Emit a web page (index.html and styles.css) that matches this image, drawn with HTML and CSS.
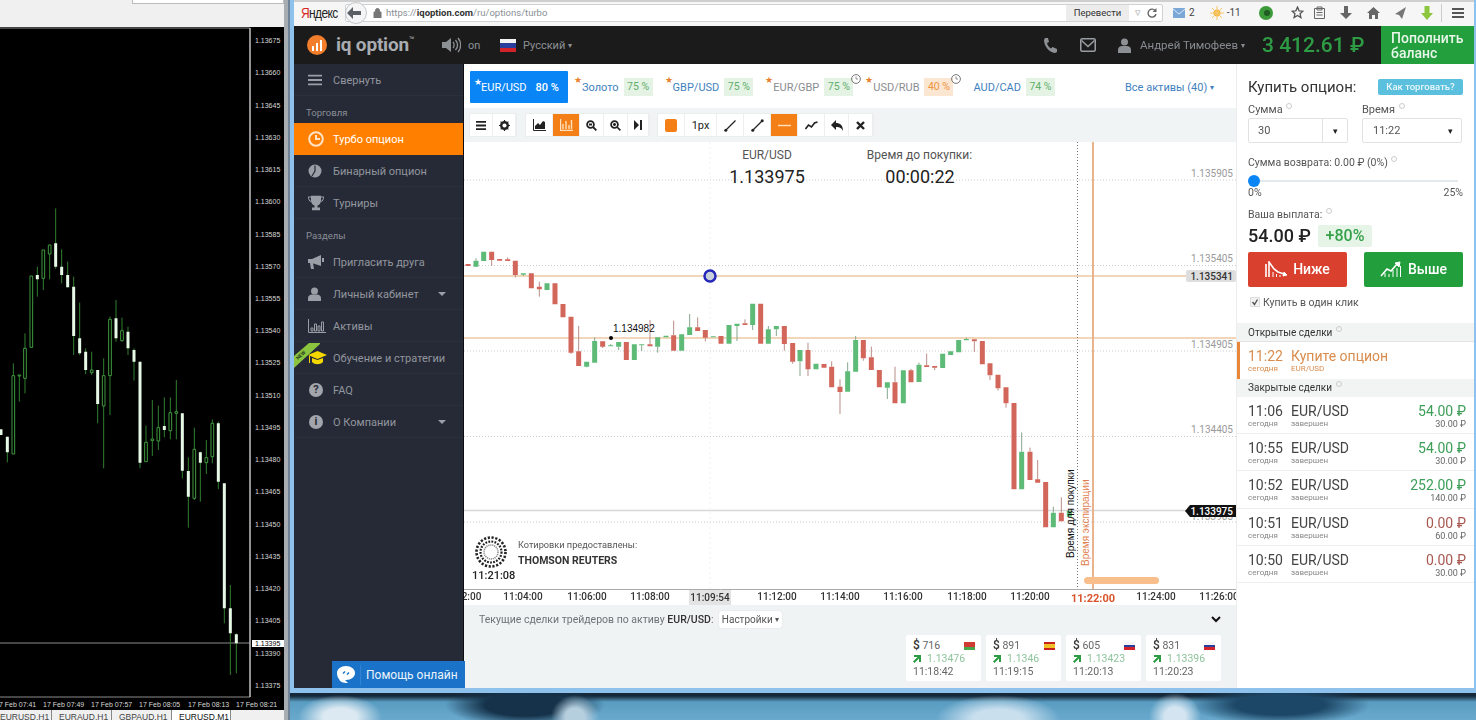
FILE: index.html
```html
<!DOCTYPE html>
<html lang="ru">
<head>
<meta charset="utf-8">
<title>IQ Option</title>
<link rel="stylesheet" href="styles.css">
</head>
<body>
<div class="desktop">
  <section class="mt4">
    <div class="mt4-top"><div class="mt4-input"></div></div>
    <svg class="mt4-chart" width="284" height="683" viewBox="0 27 284 683">
      <rect x="0" y="27" width="284" height="683" fill="#000"/>
      <path d="M0 28H250V697H0M0 643H250" fill="none" stroke="#8b8b8b" stroke-width="1"/>
      <g transform="scale(.33333)">
        <path class="mw" d="M22 1310V1387M40 1090V1362M58 1125V1205M75 1000V1180M112 800V890M130 750V870M149 735V838M167 625V806M185 748V850M203 785V862M221 830V1065M239 908V1065M257 1045V1122M275 1055V1125M293 1110V1270M311 1075V1405M330 950V1245M348 900V1025M366 953V1025M384 980V1065M402 1045V1142M420 1085V1405M438 1277V1385M457 1200V1368M475 1217V1350M493 1192V1312M511 1192V1318M529 1140V1318M547 1240V1435M565 1372V1583M583 1283V1500M601 1355V1505M619 1320V1422M637 1258V1390M655 1265V1467M673 1450V1870M691 1755V2025M709 1900V2020"/>
        <path class="mh" d="M36 1127h8V1362h-8zM54 1125h8V1128h-8zM71 1045h8V1135h-8zM90 828h8V1042h-8zM126 750h8V835h-8zM145 735h8V762h-8zM271 1110h8V1118h-8zM307 1127h8V1218h-8zM326 958h8V1127h-8zM362 992h8V1022h-8zM434 1327h8V1385h-8zM453 1317h8V1322h-8zM471 1283h8V1323h-8zM507 1238h8V1292h-8zM525 1235h8V1240h-8zM579 1348h8V1495h-8zM615 1373h8V1388h-8zM633 1270h8V1370h-8z"/>
        <path class="ms" d="M3 1288V1305M22 1310V1357M112 825V838M167 730V800M185 800V825M203 825V862M221 860V1008M239 1015V1060M257 1055V1110M293 1110V1212M348 955V1015M384 995V1045M402 1050V1085M420 1085V1388M493 1278V1290M547 1240V1412M565 1413V1490M601 1357V1388M655 1270V1445M673 1450V1825M691 1825V1900M709 1903V1930"/>
      </g>
      <g class="mt4-axis">
        <text x="255" y="42.500">1.13675</text><text x="255" y="74.500">1.13660</text><text x="255" y="107.500">1.13645</text>
        <text x="255" y="139.500">1.13630</text><text x="255" y="172">1.13615</text><text x="255" y="204">1.13600</text>
        <text x="255" y="236.500">1.13585</text><text x="255" y="268.500">1.13570</text><text x="255" y="301">1.13555</text>
        <text x="255" y="333">1.13540</text><text x="255" y="365">1.13525</text><text x="255" y="397.500">1.13510</text>
        <text x="255" y="429.500">1.13495</text><text x="255" y="462">1.13480</text><text x="255" y="494">1.13465</text>
        <text x="255" y="526.500">1.13450</text><text x="255" y="558.500">1.13435</text><text x="255" y="591">1.13420</text>
        <text x="255" y="623">1.13405</text><text x="255" y="655.500">1.13390</text><text x="255" y="687.500">1.13375</text>
        <rect x="252" y="640" width="32" height="7" fill="#fff"/>
        <text class="mt4-bid" x="255" y="646">1.13395</text>
        <text x="-5" y="706.500">17 Feb 07:41</text><text x="43" y="706.500">17 Feb 07:49</text><text x="91" y="706.500">17 Feb 07:57</text>
        <text x="139" y="706.500">17 Feb 08:05</text><text x="188" y="706.500">17 Feb 08:13</text><text x="236" y="706.500">17 Feb 08:21</text>
      </g>
      <path d="M250 28V697" stroke="#ddd" stroke-width="1"/>
    </svg>
    <div class="mt4-tabs">
      <span class="mt4-tab">EURUSD,H1</span>
      <span class="mt4-tab">EURAUD,H1</span>
      <span class="mt4-tab">GBPAUD,H1</span>
      <span class="mt4-tab mt4-tab-on">EURUSD,M1</span>
    </div>
  </section>

  <div class="mt4-edge"></div>

  <div class="right-side">
    <main class="window">
      <header class="browser-bar">
        <span class="ya"><b>Я</b>ндекс</span>
        <div class="urlbar">
          <span class="back"><svg width="14" height="12" viewBox="0 0 14 12"><path d="M6 0 0 6l6 6V8h8V4H6z" fill="#5a5f66"/></svg></span>
          <svg class="lock" width="9" height="10" viewBox="0 0 9 10"><path d="M1 4h7v6H1zM2.500 4V2.500a2 2 0 0 1 4 0V4" fill="#777" stroke="#777"/></svg>
          <span class="url">https://<b>iqoption.com</b>/ru/options/turbo</span>
          <span class="translate">Перевести</span>
          <span class="url-arrow">▿</span>
          <svg width="10" height="10" viewBox="0 0 10 10"><path d="M8.500 3A4 4 0 1 0 9 6" fill="none" stroke="#666" stroke-width="1.400"/><path d="M9.500 0v4h-4z" fill="#666"/></svg>
        </div>
        <div class="bar-icons">
          <span class="bar-item"><svg width="12" height="10" viewBox="0 0 12 10"><rect width="12" height="10" fill="#7ba7d6"/><path d="m0 1 6 5 6-5" fill="none" stroke="#dce9f6"/></svg>2</span>
          <span class="bar-item bar-sun"><svg width="14" height="14" viewBox="0 0 14 14"><circle cx="7" cy="7" r="3.600" fill="#f4b942"/><path d="M7 0v14M0 7h14M2 2l10 10M12 2 2 12" stroke="#f4c76c"/></svg>-11</span>
          <svg class="bar-coin" width="14" height="14" viewBox="0 0 14 14"><circle cx="7" cy="7" r="7" fill="#3d9a3a"/><circle cx="8" cy="7" r="3" fill="#1f5c22"/></svg>
          <svg class="bar-glyph bar-star" width="13" height="13" viewBox="0 0 24 24"><path d="m12 2 3 7 7 .6-5.300 4.700 1.600 7.200L12 17.600 5.700 21.500l1.600-7.200L2 9.600 9 9z" fill="none" stroke="#555" stroke-width="2.400"/></svg>
          <svg class="bar-glyph" width="11" height="13" viewBox="0 0 11 13"><path d="M.5 2.500h10v10H.5zM3 1h5v3H3zM2.500 6.500h6M2.500 9h6" fill="none" stroke="#666"/></svg>
          <svg class="bar-glyph" width="12" height="13" viewBox="0 0 12 13"><path d="M4 0h4v7h4l-6 6-6-6h4z" fill="#666"/></svg>
          <svg class="bar-glyph" width="13" height="12" viewBox="0 0 13 12"><path d="M6.500 0 13 6h-2v6H8V8H5v4H2V6H0z" fill="#666"/></svg>
          <svg class="bar-glyph" width="11" height="12" viewBox="0 0 11 12"><path d="M11 0 0 7l4 1 3 4z" fill="#777"/></svg>
          <svg class="bar-glyph" width="12" height="14" viewBox="0 0 12 14"><path d="M3.500 0h5v7H12l-6 7-6-7h3.500z" fill="#8cc63f"/></svg>
          <span class="bar-div"></span>
          <svg width="12" height="10" viewBox="0 0 12 10"><path d="M0 0h12v2H0zM0 4h12v2H0zM0 8h12v2H0z" fill="#555"/></svg>
        </div>
      </header>

      <header class="site-head">
        <svg class="logo-mark" width="20" height="20" viewBox="0 0 20 20"><circle cx="10" cy="10" r="10" fill="#f27e2b"/><path d="M5 11h2v5H5zM9 8h2v8H9zM13 5h2v11h-2z" fill="#fff"/></svg>
        <span class="logo-text">iq option<sup>™</sup></span>
        <svg class="speaker" width="19" height="16" viewBox="0 0 19 16"><path d="M0 5h4l5-4v14l-5-4H0z" fill="#8d9196"/><path d="M11 5c1.500 1.500 1.500 4.500 0 6M13.500 3c2.500 3 2.500 7 0 10M16 1c3.500 4 3.500 10 0 14" fill="none" stroke="#8d9196" stroke-width="1.300"/></svg>
        <span class="on">on</span>
        <span class="flag flag-ru flag-lang"></span>
        <span class="lang">Русский <i class="mini">▾</i></span>
        <span class="head-space"></span>
        <svg class="h-phone" width="13" height="15" viewBox="0 0 13 15"><path d="M1 0 4 0l1 4-2 1c.5 2.500 2 4.500 4 5.500l1.500-1.500L13 11v3l-2 1C5 14.500 0 8 0 2z" fill="#8d9196"/></svg>
        <svg class="h-mail" width="16" height="14" viewBox="0 0 16 14"><rect x=".75" y=".75" width="14.500" height="12.500" rx="1.500" fill="none" stroke="#9a9ea3" stroke-width="1.500"/><path d="m1.500 2.500 6.500 6 6.500-6" fill="none" stroke="#9a9ea3" stroke-width="1.500"/></svg>
        <svg class="h-user" width="13" height="15" viewBox="0 0 13 15"><circle cx="6.500" cy="4" r="3.500" fill="#8d9196"/><path d="M0 15v-3c0-3 2-4 4-4h5c2 0 4 1 4 4v3z" fill="#8d9196"/></svg>
        <span class="uname">Андрей Тимофеев <i class="mini">▾</i></span>
        <span class="balance">3 412.61 ₽</span>
        <a class="topup">Пополнить баланс</a>
      </header>

      <div class="app">
        <nav class="side">
          <a class="nav"><svg class="ic" width="14" height="11" viewBox="0 0 14 11"><path d="M0 0h14v2H0zM0 4.500h14v2H0zM0 9h14v2H0z" fill="#9a9ea6"/></svg>Свернуть</a>
          <div class="nav-head">Торговля</div>
          <a class="nav nav-on"><svg class="ic" width="16" height="16" viewBox="0 0 16 16"><circle cx="8" cy="8" r="6.800" fill="none" stroke="#fde3c8" stroke-width="2"/><path d="M8 4v4h4" fill="none" stroke="#fde3c8" stroke-width="2"/></svg>Турбо опцион</a>
          <a class="nav"><svg class="ic" width="14" height="14" viewBox="0 0 14 14"><circle cx="7" cy="7" r="6.500" fill="#9a9ea6"/><path d="M7 1.500V7L4 12" fill="none" stroke="#262a36" stroke-width="1.200"/></svg>Бинарный опцион</a>
          <a class="nav"><svg class="ic" width="16" height="15" viewBox="0 0 16 15"><path d="M3 0h10v5c0 3-2 4.500-3.500 5V12H12v3H4v-3h2.500V10C5 9.500 3 8 3 5zM0 1h3v1H1c0 2 1 3 2 3.500v1C1 6 0 4 0 1zm16 0h-3v1h2c0 2-1 3-2 3.500v1c2-.5 3-2.500 3-5.500z" fill="#9a9ea6"/></svg>Турниры</a>
          <div class="nav-head">Разделы</div>
          <a class="nav"><svg class="ic" width="16" height="14" viewBox="0 0 16 14"><path d="M0 4h4l9-4v11L4 8H0zM14 3h2v4h-2zM2 8h3l1 6H3z" fill="#9a9ea6"/></svg>Пригласить друга</a>
          <a class="nav"><svg class="ic" width="13" height="14" viewBox="0 0 13 14"><circle cx="6.500" cy="4" r="3.500" fill="#9a9ea6"/><path d="M0 14v-3c0-2 2-3.500 4-3.500h5c2 0 4 1.500 4 3.500v3z" fill="#9a9ea6"/></svg>Личный кабинет<i class="caret"></i></a>
          <a class="nav"><svg class="ic" width="18" height="14" viewBox="0 0 18 14"><path d="M.5 0v13.500H18M3 9h2v3H3zM6.500 5h2v7h-2zM10 7h2v5h-2zM13.500 3h2v9h-2z" fill="none" stroke="#9a9ea6"/></svg>Активы</a>
          <a class="nav"><svg class="ic" width="19" height="14" viewBox="0 0 19 14"><path d="M0 4 9.500 0 19 4 9.500 8zM4 7l5.500 2L15 7v4c-3 3-8 3-11 0zM1 5h1v7H1z" fill="#f5d800"/></svg>Обучение и стратегии</a>
          <a class="nav"><span class="ic round">?</span>FAQ</a>
          <a class="nav"><span class="ic round">i</span>О Компании<i class="caret"></i></a>
          <svg class="ribbon" width="26" height="26" viewBox="0 0 26 26"><path d="M0 13 15 0h12L0 25z" fill="#8bc53f"/><text x="0" y="0" transform="translate(4 17) rotate(-42)" class="ribbon-text">NEW</text></svg>
        </nav>

        <section class="center">
          <div class="assets">
            <a class="tab tab-on"><i class="star">★</i>EUR/USD<span class="pct">80 %</span></a>
            <a class="tab tab-first"><i class="star">★</i>Золото<span class="badge">75 %</span></a>
            <a class="tab"><i class="star">★</i>GBP/USD<span class="badge">75 %</span></a>
            <a class="tab tab-grey"><i class="star">★</i>EUR/GBP<span class="badge">75 %</span><svg class="clock" width="10" height="10" viewBox="0 0 10 10"><circle cx="5" cy="5" r="4.400" fill="none" stroke="#777"/><path d="M5 2.500V5h2" fill="none" stroke="#777" stroke-width=".8"/></svg></a>
            <a class="tab tab-grey"><i class="star">★</i>USD/RUB<span class="badge badge-warn">40 %</span><svg class="clock" width="10" height="10" viewBox="0 0 10 10"><circle cx="5" cy="5" r="4.400" fill="none" stroke="#777"/><path d="M5 2.500V5h2" fill="none" stroke="#777" stroke-width=".8"/></svg></a>
            <a class="tab">AUD/CAD<span class="badge">74 %</span></a>
            <a class="all-assets">Все активы (40) <i class="mini">▾</i></a>
          </div>

          <div class="tools">
            <div class="tgroup tg1">
              <button class="tb"><svg width="10" height="9" viewBox="0 0 10 9"><path d="M0 0h10v1.800H0zM0 3.600h10v1.800H0zM0 7.200h10V9H0z" fill="#222"/></svg></button>
              <button class="tb"><svg width="11" height="11" viewBox="0 0 11 11"><circle cx="5.500" cy="5.500" r="3.300" fill="none" stroke="#222" stroke-width="2.400"/><path d="M5.500 0v11M0 5.500h11M1.600 1.600l7.800 7.800M9.400 1.600 1.600 9.400" stroke="#222" stroke-width="1.200" stroke-dasharray="1.800 7.400"/></svg></button>
            </div>
            <div class="tgroup tg2">
              <button class="tb tb-w27"><svg width="13" height="12" viewBox="0 0 13 12"><path d="M.5 0v11.500H13" fill="none" stroke="#222"/><path d="M2 10V7l3-3 2 2 3-4 2 1v7z" fill="#222"/></svg></button>
              <button class="tb tb-w27 tb-on"><svg width="13" height="12" viewBox="0 0 13 12"><path d="M.5 0v11.500H13M3 5v5M6 2v8M9 6v4M11.500 1v9" fill="none" stroke="#ffe1bd" stroke-width="1.400"/></svg></button>
              <button class="tb tb-w24"><svg width="11" height="11" viewBox="0 0 11 11"><circle cx="4.500" cy="4.500" r="3.400" fill="none" stroke="#222" stroke-width="1.800"/><path d="m7 7 3.400 3.400M3 4.500h3" stroke="#222" stroke-width="1.800"/></svg></button>
              <button class="tb tb-w24"><svg width="11" height="11" viewBox="0 0 11 11"><circle cx="4.500" cy="4.500" r="3.400" fill="none" stroke="#222" stroke-width="1.800"/><path d="m7 7 3.400 3.400M3 4.500h3M4.500 3v3" stroke="#222" stroke-width="1.600"/></svg></button>
              <button class="tb tb-w21"><svg width="8" height="10" viewBox="0 0 8 10"><path d="M0 0l5 5-5 5zM6 0h2v10H6z" fill="#222"/></svg></button>
            </div>
            <div class="tgroup tg3">
              <button class="tb tb-w27"><span class="swatch"></span></button>
              <button class="tb tb-w32">1px</button>
              <button class="tb tb-w27"><svg width="13" height="13" viewBox="0 0 13 13"><path d="M1.500 11.500l10-10" stroke="#222" stroke-width="1.200"/><circle cx="1.800" cy="11.200" r="1.500" fill="#222"/></svg></button>
              <button class="tb tb-w27"><svg width="13" height="13" viewBox="0 0 13 13"><path d="M1.500 11.500l10-10" stroke="#222" stroke-width="1.200"/><circle cx="1.800" cy="11.200" r="1.500" fill="#222"/><circle cx="11.200" cy="1.800" r="1.500" fill="#222"/></svg></button>
              <button class="tb tb-w27 tb-on"><svg width="13" height="3" viewBox="0 0 13 3"><path d="M0 1.500h13" stroke="#ffe1bd" stroke-width="1.400"/></svg></button>
              <button class="tb tb-w27"><svg width="13" height="9" viewBox="0 0 13 9"><path d="m.5 8 3-4 3 2 3-4 3-1" fill="none" stroke="#222" stroke-width="1.600"/></svg></button>
              <button class="tb tb-w24"><svg width="12" height="11" viewBox="0 0 12 11"><path d="M5 0v3c4 0 7 2 7 8-1.500-3-3-4-7-4v3L0 5z" fill="#222"/></svg></button>
              <button class="tb tb-w24"><svg width="9" height="9" viewBox="0 0 9 9"><path d="m1 1 7 7M8 1 1 8" stroke="#222" stroke-width="2.400"/></svg></button>
            </div>
          </div>

          <svg class="chart" width="772" height="463" viewBox="464 142 772 463">
            <rect x="464" y="142" width="772" height="463" fill="#fff"/>
            <path d="M710 142V589" stroke="#f0f0f0" stroke-dasharray="2 3"/>
            <path class="grid" d="M464 180H1236M464 265.500H1236M464 351H1236M464 436.500H1236M464 522H1236"/>
            <path d="M464 276H1190M464 338H1236" stroke="#eec9a2" stroke-width="1.500"/>
            <path d="M464 510.500H1190" stroke="#d8d8d8" stroke-width="1.500"/>
            <g class="gl">
              <text x="1233" y="177" text-anchor="end">1.135905</text>
              <text x="1233" y="262" text-anchor="end">1.135405</text>
              <text x="1233" y="348" text-anchor="end">1.134905</text>
              <text x="1233" y="433" text-anchor="end">1.134405</text>
              <text x="1233" y="519.500" text-anchor="end">1.133905</text>
            </g>
            <path d="M1077.500 142V589" stroke="#777" stroke-dasharray="1 2"/>
            <path d="M1093 142V589" stroke="#e9b48b" stroke-width="2"/>

            <g transform="translate(464 240) scale(.33333)">
              <path class="wr" d="M83 60V78M131 52V58M154 105V112M226 125V170M321 338V342M344 258V334M416 320V324M558 240V313M629 242V286M701 232V262M724 293V304M843 238V250M961 312V332M986 365V371M1032 308V408M1103 364V380M1128 418V522"/>
              <path class="wg" d="M36 55V62M178 104V108M368 380V382M392 292V303M440 312V316M464 320V330M533 316V333M581 320V338M677 222V262M819 258V303M866 255V270M913 258V268M937 268V288M1008 364V408M1151 367V394M1175 288V300"/>
              <path class="br" d="M12 72V78M83 35V60M107 57V62M131 58V63M154 62V105M202 100V145M226 140V148M273 130V193M297 192V232M321 230V338M344 334V378M416 304V320M487 306V360M558 313V319M629 286V332M701 262V273M724 270V293M771 288V311M843 250V255M890 191V311M961 258V312M986 309V365M1032 330V388M1080 372V383M1103 380V442M1128 440V456M1198 300V355"/>
              <path class="bg" d="M36 62V80M59 35V63M178 100V104M249 130V150M368 365V380M392 303V368M440 316V319M464 306V320M511 313V360M533 313V316M581 292V320M606 287V292M653 283V332M677 262V285M748 289V292M795 255V311M819 251V258M866 191V255M913 268V311M937 258V268M1008 330V364M1056 371V388M1151 394V455M1175 300V395"/>
            </g>
            <g transform="translate(860 320) scale(.33333)">
              <path class="wr" d="M10 115V122M34 80V112M105 140V187M153 147V151M200 101V136M224 143V150M343 64V96M390 166V180M414 205V212M438 250V263M510 383V395M533 420V478M604 532V578"/>
              <path class="wg" d="M82 203V237M177 128V134M319 53V57M485 337V395M580 560V578"/>
              <path class="br" d="M34 112V150M58 150V202M105 187V250M153 151V187M200 136V141M224 138V143M343 58V64M367 63V133M390 130V166M414 164V205M438 202V250M462 249V508M510 395V480M533 478V488M557 486V622M604 578V604"/>
              <path class="bg" d="M82 187V203M130 151V250M177 134V186M248 101V144M272 94V105M296 60V97M319 57V61M485 395V508M580 578V622M628 572V590"/>
            </g>

            <circle cx="710" cy="276" r="5.500" fill="#c9d0dc" stroke="#2626b8" stroke-width="2.500"/>
            <circle cx="611" cy="338" r="2" fill="#000"/>
            <text class="pt" x="613" y="332">1.134982</text>

            <text class="ct" x="767" y="159" text-anchor="middle">EUR/USD</text>
            <text class="cv" x="767" y="183" text-anchor="middle">1.133975</text>
            <text class="ct" x="919.500" y="159" text-anchor="middle">Время до покупки:</text>
            <text class="cv" x="920" y="183" text-anchor="middle">00:00:22</text>

            <rect x="1186" y="270" width="50" height="12" rx="2" fill="#dedede"/>
            <text class="tagd" x="1233" y="280" text-anchor="end">1.135341</text>
            <path d="M1190 505h46v12h-46l-5-6z" fill="#111"/>
            <text class="tagl" x="1233" y="514.500" text-anchor="end">1.133975</text>

            <text class="vt" transform="translate(1074 558) rotate(-90)">Время для покупки</text>
            <text class="vt vt-o" transform="translate(1089 566) rotate(-90)">Время экспирации</text>
            <rect x="1084" y="577" width="75" height="7" rx="3.500" fill="#f8bf8c"/>

            <g fill="none" stroke="#222">
              <circle cx="491" cy="552" r="14.500" stroke-width="2.600" stroke-dasharray="2.200 1.600"/>
              <circle cx="491" cy="552" r="10.500" stroke-width="2.200" stroke-dasharray="1.800 1.300"/>
              <circle cx="491" cy="552" r="7" stroke-width="1.500" stroke="#888" stroke-dasharray="1.200 .8"/>
            </g>
            <text class="rt-time" x="472" y="579">11:21:08</text>
            <text class="rt-a" x="518" y="548">Котировки предоставлены:</text>
            <text class="rt-b" x="518" y="564">THOMSON REUTERS</text>

            <path d="M464 589.500H1236" stroke="#aaa"/>
            <rect x="689" y="590" width="42" height="15" fill="#e3e3e3"/>
            <g class="ax">
              <text x="442" y="600">11:02:00</text>
              <text x="523" y="600" text-anchor="middle">11:04:00</text>
              <text x="587" y="600" text-anchor="middle">11:06:00</text>
              <text x="650" y="600" text-anchor="middle">11:08:00</text>
              <text x="710" y="601" text-anchor="middle">11:09:54</text>
              <text x="777" y="600" text-anchor="middle">11:12:00</text>
              <text x="840" y="600" text-anchor="middle">11:14:00</text>
              <text x="903" y="600" text-anchor="middle">11:16:00</text>
              <text x="967" y="600" text-anchor="middle">11:18:00</text>
              <text x="1030" y="600" text-anchor="middle">11:20:00</text>
              <text class="ax-now" x="1093" y="602" text-anchor="middle">11:22:00</text>
              <text x="1156" y="600" text-anchor="middle">11:24:00</text>
              <text x="1219" y="600" text-anchor="middle">11:26:00</text>
            </g>
          </svg>

          <div class="traders">
            <div class="traders-head">
              <span class="traders-title">Текущие сделки трейдеров по активу <b>EUR/USD</b>:</span>
              <a class="settings">Настройки <i class="mini">▾</i></a>
              <svg class="chev" width="10" height="7" viewBox="0 0 10 7"><path d="m1 1 4 4 4-4" fill="none" stroke="#111" stroke-width="2"/></svg>
            </div>
            <div class="cards">
              <div class="card"><div class="c1"><span><b>$</b> 716</span><i class="flag flag-by"></i></div><div class="c2"><svg width="8" height="8" viewBox="0 0 8 8"><path d="M1 0h7v7H6V3.500L1.500 8 0 6.500 4.500 2H1z" fill="#2a9a43"/></svg>1.13476</div><div class="c3">11:18:42</div></div>
              <div class="card"><div class="c1"><span><b>$</b> 891</span><i class="flag flag-es"></i></div><div class="c2"><svg width="8" height="8" viewBox="0 0 8 8"><path d="M1 0h7v7H6V3.500L1.500 8 0 6.500 4.500 2H1z" fill="#2a9a43"/></svg>1.1346</div><div class="c3">11:19:15</div></div>
              <div class="card"><div class="c1"><span><b>$</b> 605</span><i class="flag flag-ru"></i></div><div class="c2"><svg width="8" height="8" viewBox="0 0 8 8"><path d="M1 0h7v7H6V3.500L1.500 8 0 6.500 4.500 2H1z" fill="#2a9a43"/></svg>1.13423</div><div class="c3">11:20:13</div></div>
              <div class="card"><div class="c1"><span><b>$</b> 831</span><i class="flag flag-ru"></i></div><div class="c2"><svg width="8" height="8" viewBox="0 0 8 8"><path d="M1 0h7v7H6V3.500L1.500 8 0 6.500 4.500 2H1z" fill="#2a9a43"/></svg>1.13396</div><div class="c3">11:20:23</div></div>
            </div>
          </div>
        </section>

        <aside class="panel">
          <div class="buy">
            <div class="buy-title"><h2>Купить опцион:</h2><a class="howto">Как торговать?</a></div>
            <div class="fields">
              <div class="field"><label>Сумма <i class="hint"></i></label>
                <div class="box"><span class="box-v">30</span><span class="box-c">▾</span></div></div>
              <div class="field"><label>Время <i class="hint"></i></label>
                <div class="box box-t"><span class="box-v">11:22</span><span class="box-a">▾</span></div></div>
            </div>
            <div class="return">Сумма возврата: 0.00 ₽ (0%) <i class="hint"></i></div>
            <div class="slider"><span class="knob"></span></div>
            <div class="scale"><span>0%</span><span>25%</span></div>
            <div class="pay-label">Ваша выплата: <i class="hint"></i></div>
            <div class="pay"><strong>54.00 ₽</strong><span class="plus">+80%</span></div>
            <div class="acts">
              <a class="act act-down"><svg width="22" height="17" viewBox="0 0 22 17"><path d="M1 16V3M4 16V1l5 7 4 3 6 2" fill="none" stroke="#fff" stroke-width="1.600"/><path d="M8 16v-5M11.500 16v-3M15 16v-2M19 11l3 3-4 1z" stroke="#fff" fill="#fff"/></svg>Ниже</a>
              <a class="act act-up"><svg width="22" height="17" viewBox="0 0 22 17"><path d="m1 15 6-7 4 2 6-7" fill="none" stroke="#fff" stroke-width="1.600"/><path d="M15 2l5-1-1 5zM5 16v-4M9 16v-3M13 16V9M17 16V7M20.500 16V5" stroke="#fff" fill="#fff"/></svg>Выше</a>
            </div>
            <div class="oneclick"><svg width="10" height="10" viewBox="0 0 10 10"><path d="M.5.500h9v9h-9z" fill="#f3f3f3" stroke="#ddd"/><path d="m2.500 5 2 2.500 3-5" fill="none" stroke="#555" stroke-width="1.400"/></svg>Купить в один клик</div>
          </div>

          <div class="sect">Открытые сделки <i class="hint"></i></div>
          <div class="deal deal-open">
            <div class="d-time">11:22<small>сегодня</small></div>
            <div class="d-name">Купите опцион<small>EUR/USD</small></div>
          </div>
          <div class="sect sect2">Закрытые сделки <i class="hint"></i></div>
          <div class="deal"><div class="d-time">11:06<small>сегодня</small></div><div class="d-name">EUR/USD<small>завершен</small></div><div class="d-sum win">54.00 ₽<small>30.00 ₽</small></div></div>
          <div class="deal"><div class="d-time">10:55<small>сегодня</small></div><div class="d-name">EUR/USD<small>завершен</small></div><div class="d-sum win">54.00 ₽<small>30.00 ₽</small></div></div>
          <div class="deal"><div class="d-time">10:52<small>сегодня</small></div><div class="d-name">EUR/USD<small>завершен</small></div><div class="d-sum win">252.00 ₽<small>140.00 ₽</small></div></div>
          <div class="deal"><div class="d-time">10:51<small>сегодня</small></div><div class="d-name">EUR/USD<small>завершен</small></div><div class="d-sum loss">0.00 ₽<small>60.00 ₽</small></div></div>
          <div class="deal"><div class="d-time">10:50<small>сегодня</small></div><div class="d-name">EUR/USD<small>завершен</small></div><div class="d-sum loss">0.00 ₽<small>30.00 ₽</small></div></div>
        </aside>

        <a class="help"><svg width="18" height="17" viewBox="0 0 18 17"><path d="M9 0c5 0 9 3 9 7s-4 7-9 7h-1l3 3c-5 0-8-1-9-4-1-1-2-3-2-6 0-4 4-7 9-7z" fill="#fff"/><path d="M6 7.500 8 5.500M12 6.500l-2 2" stroke="#1a73c9" stroke-width="1.500"/></svg><span class="help-text">Помощь онлайн</span></a>
      </div>
    </main>
    <div class="photo"></div>
  </div>
</div>
</body>
</html>
```

FILE: styles.css
```css
* { box-sizing: border-box; }
html, body { margin: 0; padding: 0; height: 100%; }
body { width: 1476px; height: 720px; overflow: hidden; background: #000; font-family: Roboto, "Liberation Sans", sans-serif; color: #444; }
a { text-decoration: none; color: inherit; }
h2 { margin: 0; font-weight: 400; }
i { font-style: normal; }
small { display: block; }
svg { display: block; flex: none; }
button { font: inherit; border: 0; padding: 0; margin: 0; }
.mini { font-size: 8px; vertical-align: 1px; }

.desktop { display: flex; width: 1476px; height: 720px; filter: blur(.4px); }

/* MT4 */
.mt4 { width: 284px; height: 720px; display: flex; flex-direction: column; background: #f0f0f0; }
.mt4-top { height: 27px; display: flex; justify-content: flex-end; }
.mt4-input { width: 152px; height: 4px; background: #fff; border: 1px solid #bbb; border-top: 0; }
.mt4-chart { height: 683px; }
.mw { stroke: #2f7f2f; stroke-width: 3; fill: none; }
.mh { stroke: #3f9a3f; stroke-width: 3; fill: #000; }
.ms { stroke: #e6f8e6; stroke-width: 9; fill: none; }
.mt4-axis text { font: 7px "Liberation Sans", sans-serif; fill: #d8d8d8; }
.mt4-axis .mt4-bid { fill: #000; }
.mt4-tabs { height: 10px; display: flex; overflow: hidden; font: 8.500px "Liberation Sans", sans-serif; color: #444; }
.mt4-tab { width: 60px; padding-left: 7px; line-height: 14px; border-right: 1px solid #888; white-space: nowrap; }
.mt4-tab:first-child { width: 52px; padding-left: 0; }
.mt4-tab-on { background: #fff; color: #111; width: 59px; }
.mt4-edge { width: 6px; height: 720px; background: linear-gradient(90deg, #a8adb2 0 4px, #6f8296 4px); }

.right-side { width: 1186px; height: 720px; display: flex; flex-direction: column; }
.window { height: 693px; border-left: 4px solid #8ec2ec; border-right: 2px solid #8ec2ec; border-bottom: 5px solid #8ec2ec; display: flex; flex-direction: column; background: #fff; }
.photo { flex: 1; background:
  radial-gradient(ellipse 42px 22px at 50px 24px, #dce9f2 0 40%, transparent 100%),
  radial-gradient(ellipse 24px 22px at 285px 24px, #b6cfdf 0 40%, transparent 100%),
  radial-gradient(ellipse 62px 24px at 708px 26px, #c9dfee 0 40%, transparent 100%),
  radial-gradient(ellipse 26px 24px at 885px 24px, #d4e5f1 0 40%, transparent 100%),
  radial-gradient(ellipse 80px 22px at 235px 12px, #15324a 0 50%, transparent 100%),
  radial-gradient(ellipse 90px 20px at 990px 12px, #1d4766 0 50%, transparent 100%),
  linear-gradient(180deg, #16293a 0 3px, #5a9dc2 9px, #69a9cd 100%); }

/* browser bar */
.browser-bar { height: 26px; display: flex; align-items: center; background: #f6f6f6; border-top: 2px solid #cfcfcf; padding: 0 0 3px 7px; font-size: 10px; }
.ya { width: 44px; font: 12px "Liberation Sans", sans-serif; letter-spacing: -.6px; transform: scaleY(1.15); color: #222; }
.ya b { color: #d9261c; font-weight: 400; }
.urlbar { width: 818px; height: 18px; display: flex; align-items: center; background: #fff; border: 1px solid #cfd3d6; border-radius: 2px; margin-right: 10px; }
.back { width: 22px; height: 22px; flex: none; border: 1px solid #c4c8cc; border-radius: 50%; background: #f5f5f5; display: flex; align-items: center; justify-content: center; margin: 0 6px 0 -1px; }
.lock { margin-right: 4px; }
.url { flex: 1; font: 9.500px Roboto, sans-serif; color: #8a8f96; }
.url b { color: #333; font-weight: 700; }
.translate { width: 63px; align-self: stretch; background: #ececec; display: flex; align-items: center; justify-content: center; font-size: 9.500px; color: #333; }
.url-arrow { width: 18px; text-align: center; color: #aaa; font-size: 11px; }
.urlbar svg:last-child { margin-right: 5px; }
.bar-icons { flex: 1; display: flex; align-items: center; color: #444; }
.bar-item { display: flex; align-items: center; gap: 4px; font-size: 10px; }
.bar-sun { margin-left: 15px; gap: 3px; }
.bar-coin { margin: 0 18px 0 18px; }
.bar-glyph { margin-right: 15px; }
.bar-star { margin-right: 10px; }
.bar-div { width: 1px; height: 18px; background: #ccc; margin: 0 10px 0 -7px; }

/* header */
.site-head { height: 38px; flex: none; display: flex; align-items: center; background: #1b1b1b; color: #8d9196; font-size: 11px; padding-left: 13px; }
.logo-text { font: 700 19px/20px Roboto, sans-serif; color: #a9acb0; margin-left: 9px; width: 106px; white-space: nowrap; letter-spacing: -.2px; }
.logo-text sup { font-size: 9px; font-weight: 400; vertical-align: 8px; line-height: 0; }
.on { margin-left: 7px; width: 32px; }
.flag { display: block; width: 11px; height: 8px; flex: none; }
.flag-ru { background: linear-gradient(180deg, #f4f4f4 0 33%, #2a3f9c 33% 66%, #d2232a 66%); }
.flag-by { background: linear-gradient(180deg, #cf3b33 0 68%, #46a84a 68%); }
.flag-es { background: linear-gradient(180deg, #c6231c 0 25%, #f1bf26 25% 75%, #c6231c 75%); }
.flag-lang { width: 16px; height: 13px; margin-right: 7px; }
.lang { font-size: 11px; color: #8d9196; white-space: nowrap; }
.head-space { flex: 1; }
.h-mail { margin: 0 22px 0 23px; }
.uname { margin-left: 9px; width: 122px; font-size: 11.500px; white-space: nowrap; color: #878b90; }
.balance { font: 500 21px/38px Roboto, sans-serif; color: #2e9c44; width: 119px; white-space: nowrap; }
.topup { width: 93px; height: 38px; background: #23a03d; color: #e9f6ea; font: 500 14px/15px Roboto, sans-serif; padding: 5px 10px; }

.app { flex: 1; min-height: 0; display: flex; position: relative; }

/* sidebar */
.side { width: 170px; flex: none; background: #262a36; border-right: 1px solid #0e0e10; font-size: 11px; color: #92969e; position: relative; }
.nav { height: 32px; display: flex; align-items: center; padding: 1px 0 0 39px; position: relative; border-bottom: 1px solid #2c303d; }
.nav-on { background: #ff7f00; color: #fff; border-bottom: 0; }
.nav-head { height: 27px; padding: 11px 0 0 12px; font-size: 9.500px; color: #8a8e96; line-height: 12px; }
.ic { position: absolute; left: 14px; top: 50%; transform: translateY(-50%); }
.round { width: 14px; height: 14px; left: 15px; border-radius: 50%; background: #a2a5ab; color: #262a36; font: 700 11px/14px Roboto, sans-serif; text-align: center; }
.caret { position: absolute; right: 17px; top: 14px; width: 0; height: 0; border: 4px solid transparent; border-top: 4px solid #9a9ea6; border-bottom: 0; }
.ribbon { position: absolute; left: 0; top: 279px; }
.ribbon-text { font: 700 5px Roboto, sans-serif; fill: #27401a; }

/* center */
.center { width: 772px; flex: none; display: flex; flex-direction: column; background: #f0f3f4; }
.assets { height: 44px; flex: none; background: #fff; display: flex; align-items: center; padding: 2px 0 0 6px; font-size: 11px; color: #3f7fc0; position: relative; }
.tab { display: flex; align-items: center; padding-left: 20px; position: relative; white-space: nowrap; }
.tab-on { width: 98px; height: 32px; background: #0a85f5; color: #fff; padding-left: 11px; border-radius: 1px; }
.tab-first { padding-left: 14px; }
.tab-grey { color: #8a8d92; }
.star { position: absolute; left: 12px; top: -3px; font-size: 9px; line-height: 10px; color: #e8802c; }
.tab-first .star { left: 6px; }
.tab-on .star { left: 4px; top: 6px; color: #fff; }
.pct { margin-left: 9px; font-weight: 500; }
.badge { width: 29px; height: 18px; margin-left: 5px; background: #e4f3e4; color: #5fae6c; text-align: center; line-height: 18px; font-size: 10.500px; }
.badge-warn { background: #fbe6d2; color: #ee9440; }
.clock { position: absolute; right: -8px; top: -4px; }
.all-assets { margin-left: auto; margin-right: 22px; white-space: nowrap; font-size: 11px; }
.tools { height: 34px; flex: none; display: flex; align-items: center; background: #f1f4f5; }
.tgroup { display: flex; height: 22px; background: #fff; box-shadow: 0 0 1px #ccc; }
.tg1 { margin-left: 6px; }
.tg2 { margin-left: 10px; }
.tg3 { margin-left: 9px; }
.tb { width: 23px; height: 22px; background: #fff; display: flex; align-items: center; justify-content: center; font-size: 11px; color: #222; border-right: 1px solid #eee; }
.tb-w21 { width: 21px; }
.tb-w24 { width: 24px; }
.tb-w27 { width: 27px; }
.tb-w32 { width: 32px; }
.tb-on { background: #f57f17; }
.swatch { width: 12px; height: 13px; background: #f57f17; border-radius: 2px; }
.chart { flex: none; }
.grid { stroke: #ccc; stroke-dasharray: 1 2; fill: none; }
.gl text { font: 10px Roboto, sans-serif; fill: #9a9a9a; }
.wr { stroke: #b78d88; stroke-width: 3; fill: none; }
.wg { stroke: #84a68c; stroke-width: 3; fill: none; }
.br { stroke: #d2665a; stroke-width: 15; fill: none; }
.bg { stroke: #5dba77; stroke-width: 15; fill: none; }
.pt { font: 10px "Liberation Sans", sans-serif; fill: #111; }
.ct { font: 12px Roboto, sans-serif; fill: #555; }
.cv { font: 18px Roboto, sans-serif; fill: #222; }
.tagd { font: 500 10px Roboto, sans-serif; fill: #333; }
.tagl { font: 500 10px Roboto, sans-serif; fill: #fff; }
.vt { font: 10px "Liberation Sans", sans-serif; fill: #111; }
.vt-o { fill: #df7f4f; }
.rt-time { font: 500 11px Roboto, sans-serif; fill: #222; }
.rt-a { font: 9.200px Roboto, sans-serif; fill: #555; }
.rt-b { font: 700 10.500px Roboto, sans-serif; fill: #333; }
.ax text { font: 500 10px Roboto, sans-serif; fill: #333; }
.ax .ax-now { font: 700 11px Roboto, sans-serif; fill: #d9552b; }

.traders { flex: 1; padding: 6px 15px 0 15px; display: flex; flex-direction: column; }
.traders-head { height: 17px; display: flex; align-items: center; font-size: 10.500px; color: #6e7275; }
.traders-title { width: 240px; white-space: nowrap; }
.traders-title b { color: #333; font-weight: 500; }
.settings { width: 63px; height: 17px; background: #fff; border-radius: 2px; color: #555; font-size: 10px; line-height: 17px; text-align: center; box-shadow: 0 0 1px #bbb; }
.chev { margin-left: auto; }
.cards { display: flex; gap: 5px; justify-content: flex-end; margin-top: 7px; }
.card { width: 75px; height: 46px; background: #fff; border-radius: 2px; padding: 4px 6px 0 7px; font-size: 10.500px; line-height: 13px; color: #666; }
.c1 { display: flex; justify-content: space-between; align-items: center; }
.c1 b { color: #333; font-size: 12px; font-weight: 500; }
.c2 { color: #8fc49c; display: flex; gap: 6px; align-items: center; }
.c3 { color: #666; }

/* panel */
.panel { flex: 1; background: #fff; border-left: 1px solid #ececec; display: flex; flex-direction: column; color: #555; }
.buy { padding: 15px 11px 0 11px; height: 259px; flex: none; }
.buy-title { height: 16px; display: flex; justify-content: space-between; align-items: center; }
.buy-title h2 { font-size: 15px; color: #333; }
.howto { width: 85px; height: 16px; background: #5bc0de; border-radius: 2px; color: #eaf7fb; font: 500 9.500px/16px Roboto, sans-serif; text-align: center; }
.fields { display: flex; gap: 14px; margin-top: 7px; }
.field { width: 100px; }
.field label { display: block; height: 16px; font-size: 11px; line-height: 16px; color: #555; }
.hint { display: inline-block; width: 6px; height: 6px; border-radius: 50%; border: 1.500px solid #ccc; vertical-align: 4px; margin-left: 1px; }
.box { height: 25px; display: flex; border: 1px solid #e2e2e2; border-radius: 2px; align-items: center; font-size: 11px; }
.box-v { flex: 1; padding-left: 9px; }
.box-c { width: 25px; height: 100%; border-left: 1px solid #e2e2e2; color: #222; font-size: 9px; line-height: 24px; text-align: center; }
.box-t .box-v { padding-left: 10px; }
.box-a { width: 22px; color: #222; font-size: 9px; text-align: center; }
.return { margin-top: 13px; height: 14px; font-size: 10.500px; line-height: 14px; color: #555; white-space: nowrap; }
.slider { margin-top: 5px; height: 12px; position: relative; display: flex; align-items: center; padding: 0 5px; }
.slider::before { content: ""; flex: 1; height: 2px; background: #e3e9ed; }
.knob { position: absolute; left: 0; top: 0; width: 12px; height: 12px; border-radius: 50%; background: #0a85f5; }
.scale { display: flex; justify-content: space-between; font-size: 10.500px; line-height: 12px; height: 12px; }
.pay-label { margin-top: 9px; height: 14px; font-size: 10.500px; line-height: 14px; }
.pay { margin-top: 3px; height: 22px; display: flex; align-items: center; gap: 6px; }
.pay strong { font: 500 18px/22px Roboto, sans-serif; color: #222; width: 64px; white-space: nowrap; }
.plus { width: 54px; height: 22px; background: #e6f4e7; color: #35a04a; font: 500 16px/22px Roboto, sans-serif; text-align: center; border-radius: 2px; }
.acts { margin-top: 5px; display: flex; justify-content: space-between; }
.act { width: 99px; height: 35px; border-radius: 2px; display: flex; align-items: center; justify-content: center; gap: 6px; color: #fff; font: 500 14px/35px Roboto, sans-serif; }
.act-down { background: #d9402e; }
.act-up { background: #229e3c; }
.oneclick { margin-top: 7px; height: 16px; display: flex; align-items: center; gap: 3px; padding-left: 2px; font-size: 10.500px; color: #555; }
.sect { height: 19px; background: #f2f3f3; border-bottom: 1px solid #e3e3e3; padding-left: 11px; font-size: 10px; line-height: 20px; color: #333; flex: none; }
.sect2 { height: 18px; border-bottom: 0; line-height: 18px; }
.deal { height: 37.200px; flex: none; display: flex; padding: 7px 8px 0 11px; border-bottom: 1px solid #eee; font-size: 14px; line-height: 15px; color: #444; }
.deal small { font-size: 8px; line-height: 10px; color: #888; }
.d-time { width: 43px; }
.d-name { flex: 1; }
.d-sum { text-align: right; }
.d-sum small { color: #666; font-size: 9px; }
.win { color: #3c9e58; }
.loss { color: #a85850; }
.deal-open { height: 37px; border-left: 3px solid #e8873a; padding-left: 8px; color: #d98c4c; border-bottom: 0; }
.deal-open small { color: #d98c4c; }

.help { position: absolute; left: 38px; bottom: 0; width: 133px; height: 27px; background: #1a73c9; display: flex; align-items: center; color: #eaf3fb; font-size: 12px; padding-left: 5px; z-index: 2; }
.help-text { margin-left: 5px; padding-left: 5px; border-left: 1px solid #2f83d2; line-height: 20px; white-space: nowrap; }
```
